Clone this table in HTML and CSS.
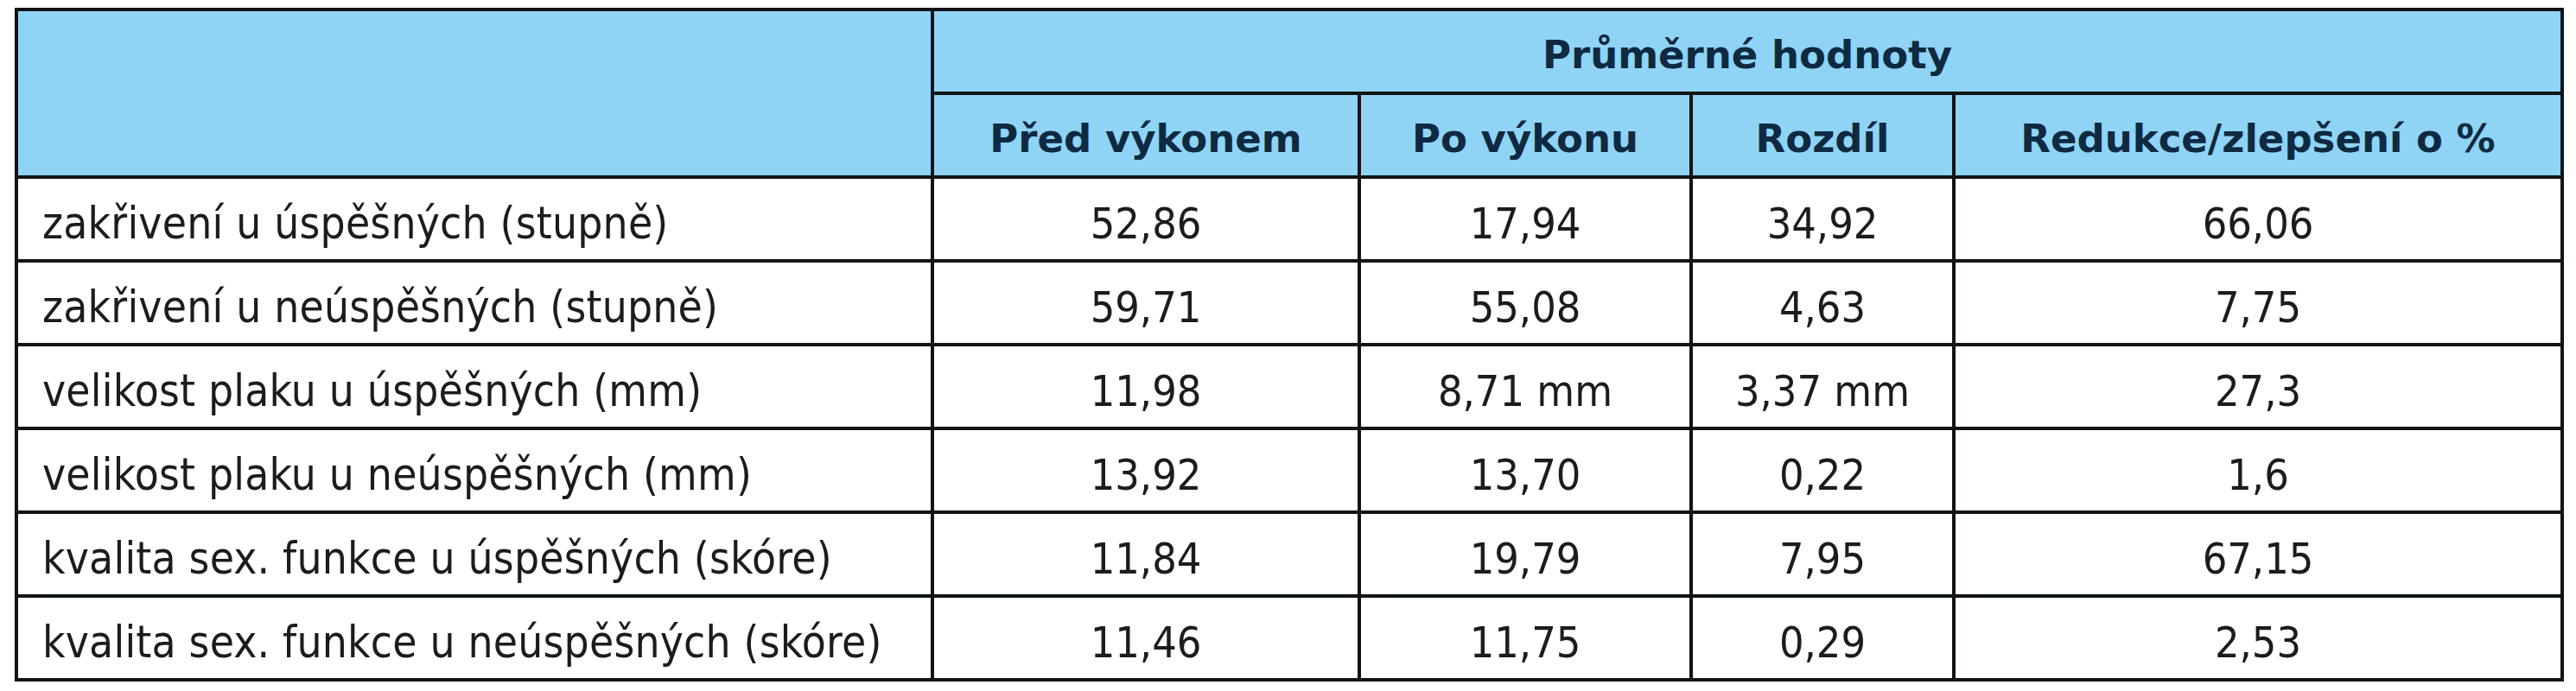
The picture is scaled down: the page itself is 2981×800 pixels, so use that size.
FILE: index.html
```html
<!DOCTYPE html>
<html lang="cs">
<head>
<meta charset="utf-8">
<title>Průměrné hodnoty</title>
<link rel="stylesheet" href="styles.css">
</head>
<body>
<table class="data-table">
  <colgroup>
    <col class="col-label">
    <col class="col-before">
    <col class="col-after">
    <col class="col-diff">
    <col class="col-pct">
  </colgroup>
  <thead>
    <tr class="head-row">
      <th class="head-cell head-empty" rowspan="2"></th>
      <th class="head-cell" colspan="4">Průměrné hodnoty</th>
    </tr>
    <tr class="head-row">
      <th class="head-cell">Před výkonem</th>
      <th class="head-cell">Po výkonu</th>
      <th class="head-cell">Rozdíl</th>
      <th class="head-cell">Redukce/zlepšení o %</th>
    </tr>
  </thead>
  <tbody>
    <tr class="body-row">
      <td class="label-cell">zakřivení u úspěšných (stupně)</td>
      <td class="num-cell">52,86</td>
      <td class="num-cell">17,94</td>
      <td class="num-cell">34,92</td>
      <td class="num-cell">66,06</td>
    </tr>
    <tr class="body-row">
      <td class="label-cell">zakřivení u neúspěšných (stupně)</td>
      <td class="num-cell">59,71</td>
      <td class="num-cell">55,08</td>
      <td class="num-cell">4,63</td>
      <td class="num-cell">7,75</td>
    </tr>
    <tr class="body-row">
      <td class="label-cell">velikost plaku u úspěšných (mm)</td>
      <td class="num-cell">11,98</td>
      <td class="num-cell">8,71 mm</td>
      <td class="num-cell">3,37 mm</td>
      <td class="num-cell">27,3</td>
    </tr>
    <tr class="body-row">
      <td class="label-cell">velikost plaku u neúspěšných (mm)</td>
      <td class="num-cell">13,92</td>
      <td class="num-cell">13,70</td>
      <td class="num-cell">0,22</td>
      <td class="num-cell">1,6</td>
    </tr>
    <tr class="body-row">
      <td class="label-cell">kvalita sex. funkce u úspěšných (skóre)</td>
      <td class="num-cell">11,84</td>
      <td class="num-cell">19,79</td>
      <td class="num-cell">7,95</td>
      <td class="num-cell">67,15</td>
    </tr>
    <tr class="body-row">
      <td class="label-cell">kvalita sex. funkce u neúspěšných (skóre)</td>
      <td class="num-cell">11,46</td>
      <td class="num-cell">11,75</td>
      <td class="num-cell">0,29</td>
      <td class="num-cell">2,53</td>
    </tr>
  </tbody>
</table>
</body>
</html>
```

FILE: styles.css
```css
html, body {
  margin: 0;
  padding: 0;
  background: #ffffff;
}

body {
  padding: 9px 0 0 17px;
}

.data-table {
  border-collapse: collapse;
  table-layout: fixed;
  width: 2946px;
  font-family: "DejaVu Sans Condensed", "Noto Sans", "DejaVu Sans", sans-serif;
  font-stretch: condensed;
  color: #1c1c1c;
}

.col-label  { width: 1060px; }
.col-before { width: 494px; }
.col-after  { width: 384px; }
.col-diff   { width: 304px; }
.col-pct    { width: 704px; }

.head-cell,
.label-cell,
.num-cell {
  border: 4px solid #111417;
  height: 97px;
  box-sizing: border-box;
  white-space: nowrap;
}

.head-cell {
  background: #8fd4f5;
  color: #0e2a42;
  font-family: "DejaVu Sans", sans-serif;
  font-stretch: normal;
  font-weight: 700;
  font-size: 45px;
  text-align: center;
  vertical-align: middle;
  padding: 8px 0 0 0;
}

.label-cell {
  font-size: 51px;
  font-weight: 400;
  letter-spacing: 0.2px;
  text-align: left;
  vertical-align: middle;
  padding: 10px 0 0 28px;
}

.num-cell {
  font-size: 50px;
  font-weight: 400;
  text-align: center;
  vertical-align: middle;
  padding: 10px 0 0 0;
}
```
